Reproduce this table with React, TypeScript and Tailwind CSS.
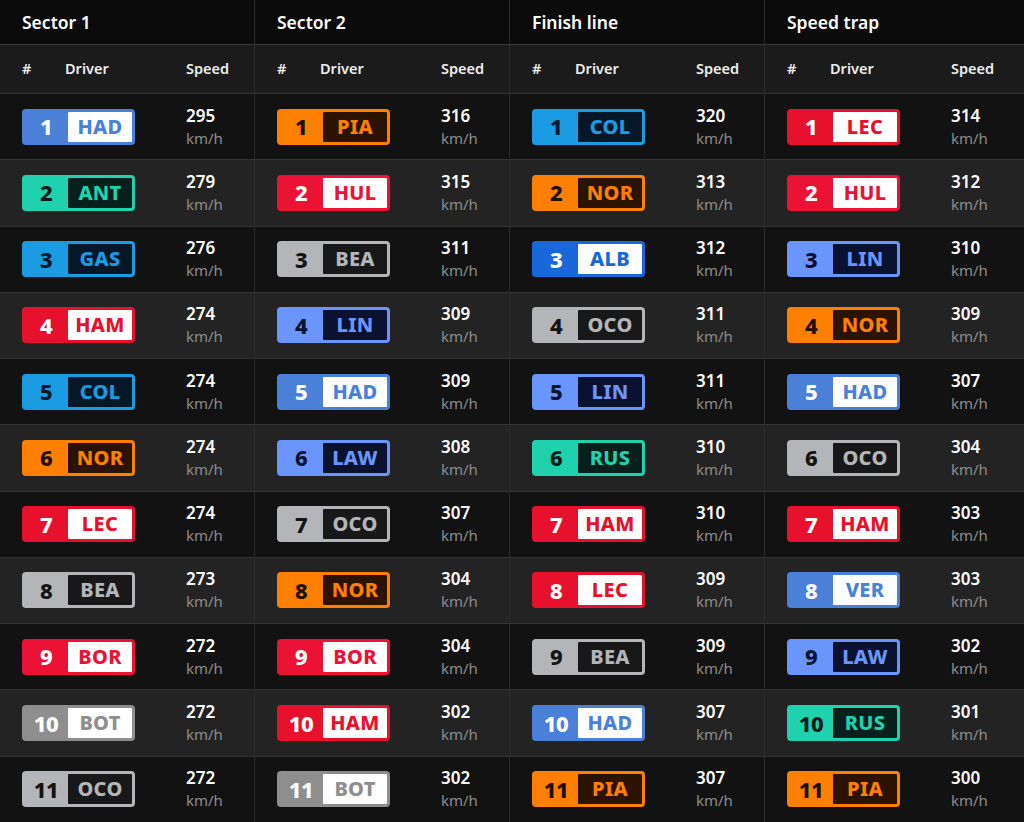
import React from "react";

type Team = {
  bg: string;
  box: string;
  code: string;
  num: string;
};

// team colour schemes, one badge style per team
const teams: Record<string, Team> = {
  redbull: { bg: "bg-[#4a80d8] border-[#4a80d8]", box: "bg-white", code: "text-[#4a80d8]", num: "text-white" },
  mercedes: { bg: "bg-[#1fd2ad] border-[#1fd2ad]", box: "bg-[#08201b]", code: "text-[#1fd2ad]", num: "text-[#0b1b17]" },
  alpine: { bg: "bg-[#1b9ce2] border-[#1b9ce2]", box: "bg-[#061827]", code: "text-[#1b9ce2]", num: "text-[#07182a]" },
  ferrari: { bg: "bg-[#e8112d] border-[#e8112d]", box: "bg-white", code: "text-[#e8112d]", num: "text-white" },
  sauber: { bg: "bg-[#ec1236] border-[#ec1236]", box: "bg-white", code: "text-[#ec1236]", num: "text-white" },
  mclaren: { bg: "bg-[#ff8000] border-[#ff8000]", box: "bg-[#2b1300]", code: "text-[#ff8000]", num: "text-[#1f0f00]" },
  haas: { bg: "bg-[#b4b5b8] border-[#b4b5b8]", box: "bg-[#181818]", code: "text-[#b4b5b8]", num: "text-[#141414]" },
  cadillac: { bg: "bg-[#8e8e8e] border-[#8e8e8e]", box: "bg-white", code: "text-[#8e8e8e]", num: "text-white" },
  rb: { bg: "bg-[#6a96fb] border-[#6a96fb]", box: "bg-[#0b1230]", code: "text-[#6a96fb]", num: "text-[#0b1230]" },
  williams: { bg: "bg-[#1868db] border-[#1868db]", box: "bg-white", code: "text-[#1868db]", num: "text-white" },
};

const driverTeam: Record<string, string> = {
  HAD: "redbull",
  VER: "redbull",
  ANT: "mercedes",
  RUS: "mercedes",
  GAS: "alpine",
  COL: "alpine",
  HAM: "ferrari",
  LEC: "ferrari",
  HUL: "sauber",
  BOR: "sauber",
  NOR: "mclaren",
  PIA: "mclaren",
  BEA: "haas",
  OCO: "haas",
  BOT: "cadillac",
  LIN: "rb",
  LAW: "rb",
  ALB: "williams",
};

const boards: { title: string; rows: [string, number][] }[] = [
  {
    title: "Sector 1",
    rows: [
      ["HAD", 295], ["ANT", 279], ["GAS", 276], ["HAM", 274], ["COL", 274], ["NOR", 274],
      ["LEC", 274], ["BEA", 273], ["BOR", 272], ["BOT", 272], ["OCO", 272],
    ],
  },
  {
    title: "Sector 2",
    rows: [
      ["PIA", 316], ["HUL", 315], ["BEA", 311], ["LIN", 309], ["HAD", 309], ["LAW", 308],
      ["OCO", 307], ["NOR", 304], ["BOR", 304], ["HAM", 302], ["BOT", 302],
    ],
  },
  {
    title: "Finish line",
    rows: [
      ["COL", 320], ["NOR", 313], ["ALB", 312], ["OCO", 311], ["LIN", 311], ["RUS", 310],
      ["HAM", 310], ["LEC", 309], ["BEA", 309], ["HAD", 307], ["PIA", 307],
    ],
  },
  {
    title: "Speed trap",
    rows: [
      ["LEC", 314], ["HUL", 312], ["LIN", 310], ["NOR", 309], ["HAD", 307], ["OCO", 304],
      ["HAM", 303], ["VER", 303], ["LAW", 302], ["RUS", 301], ["PIA", 300],
    ],
  },
];

const Badge = ({ pos, code }: { pos: number; code: string }) => {
  const t = teams[driverTeam[code]];
  return (
    <div className={`flex h-[36px] w-[113px] rounded-[4px] border-2 ${t.bg}`}>
      <div className={`w-[44px] flex items-center justify-center text-[22px] font-extrabold tracking-[-0.5px] ${t.num}`}>
        {pos}
      </div>
      <div className={`flex-1 my-[1px] mr-[1px] flex items-center justify-center rounded-[1px] text-[20px] font-extrabold tracking-[0.3px] ${t.box} ${t.code}`}>
        {code}
      </div>
    </div>
  );
};

const Board = ({ title, rows, last }: { title: string; rows: [string, number][]; last: boolean }) => (
  <div className={`flex flex-col h-[822px] ${last ? "" : "border-r border-[#2c2c2c]"}`}>
    <div className="h-[45px] shrink-0 flex items-center pl-[22px] pt-[1px] bg-[#0b0b0b] border-b border-[#3a3a3a] text-[17.5px] font-semibold text-white">
      {title}
    </div>
    <div className="h-[48px] shrink-0 flex items-center pl-[22px] bg-[#1b1b1b] text-[14.5px] font-semibold text-[#eeeeee]">
      <span className="w-[43px]">#</span>
      <span className="w-[121px]">Driver</span>
      <span>Speed</span>
    </div>
    {rows.map(([code, speed], i) => (
      <div
        key={code + i}
        className={`flex-1 flex items-center pl-[22px] border-t border-[#333333] ${i % 2 === 0 ? "bg-[#121212]" : "bg-[#232323]"}`}
      >
        <Badge pos={i + 1} code={code} />
        <div className="ml-[51px] flex flex-col leading-[23px]">
          <span className="text-[17px] font-semibold text-white">{speed}</span>
          <span className="text-[15px] text-[#8c8c8c]">km/h</span>
        </div>
      </div>
    ))}
  </div>
);

export default function App() {
  return (
    <div
      className="w-[1024px] h-[822px] overflow-hidden grid grid-cols-[255px_255px_255px_1fr] bg-[#121212]"
      style={{ fontFamily: '"Noto Sans", "Open Sans", sans-serif' }}
    >
      {boards.map((b, i) => (
        <Board key={b.title} title={b.title} rows={b.rows} last={i === boards.length - 1} />
      ))}
    </div>
  );
}
